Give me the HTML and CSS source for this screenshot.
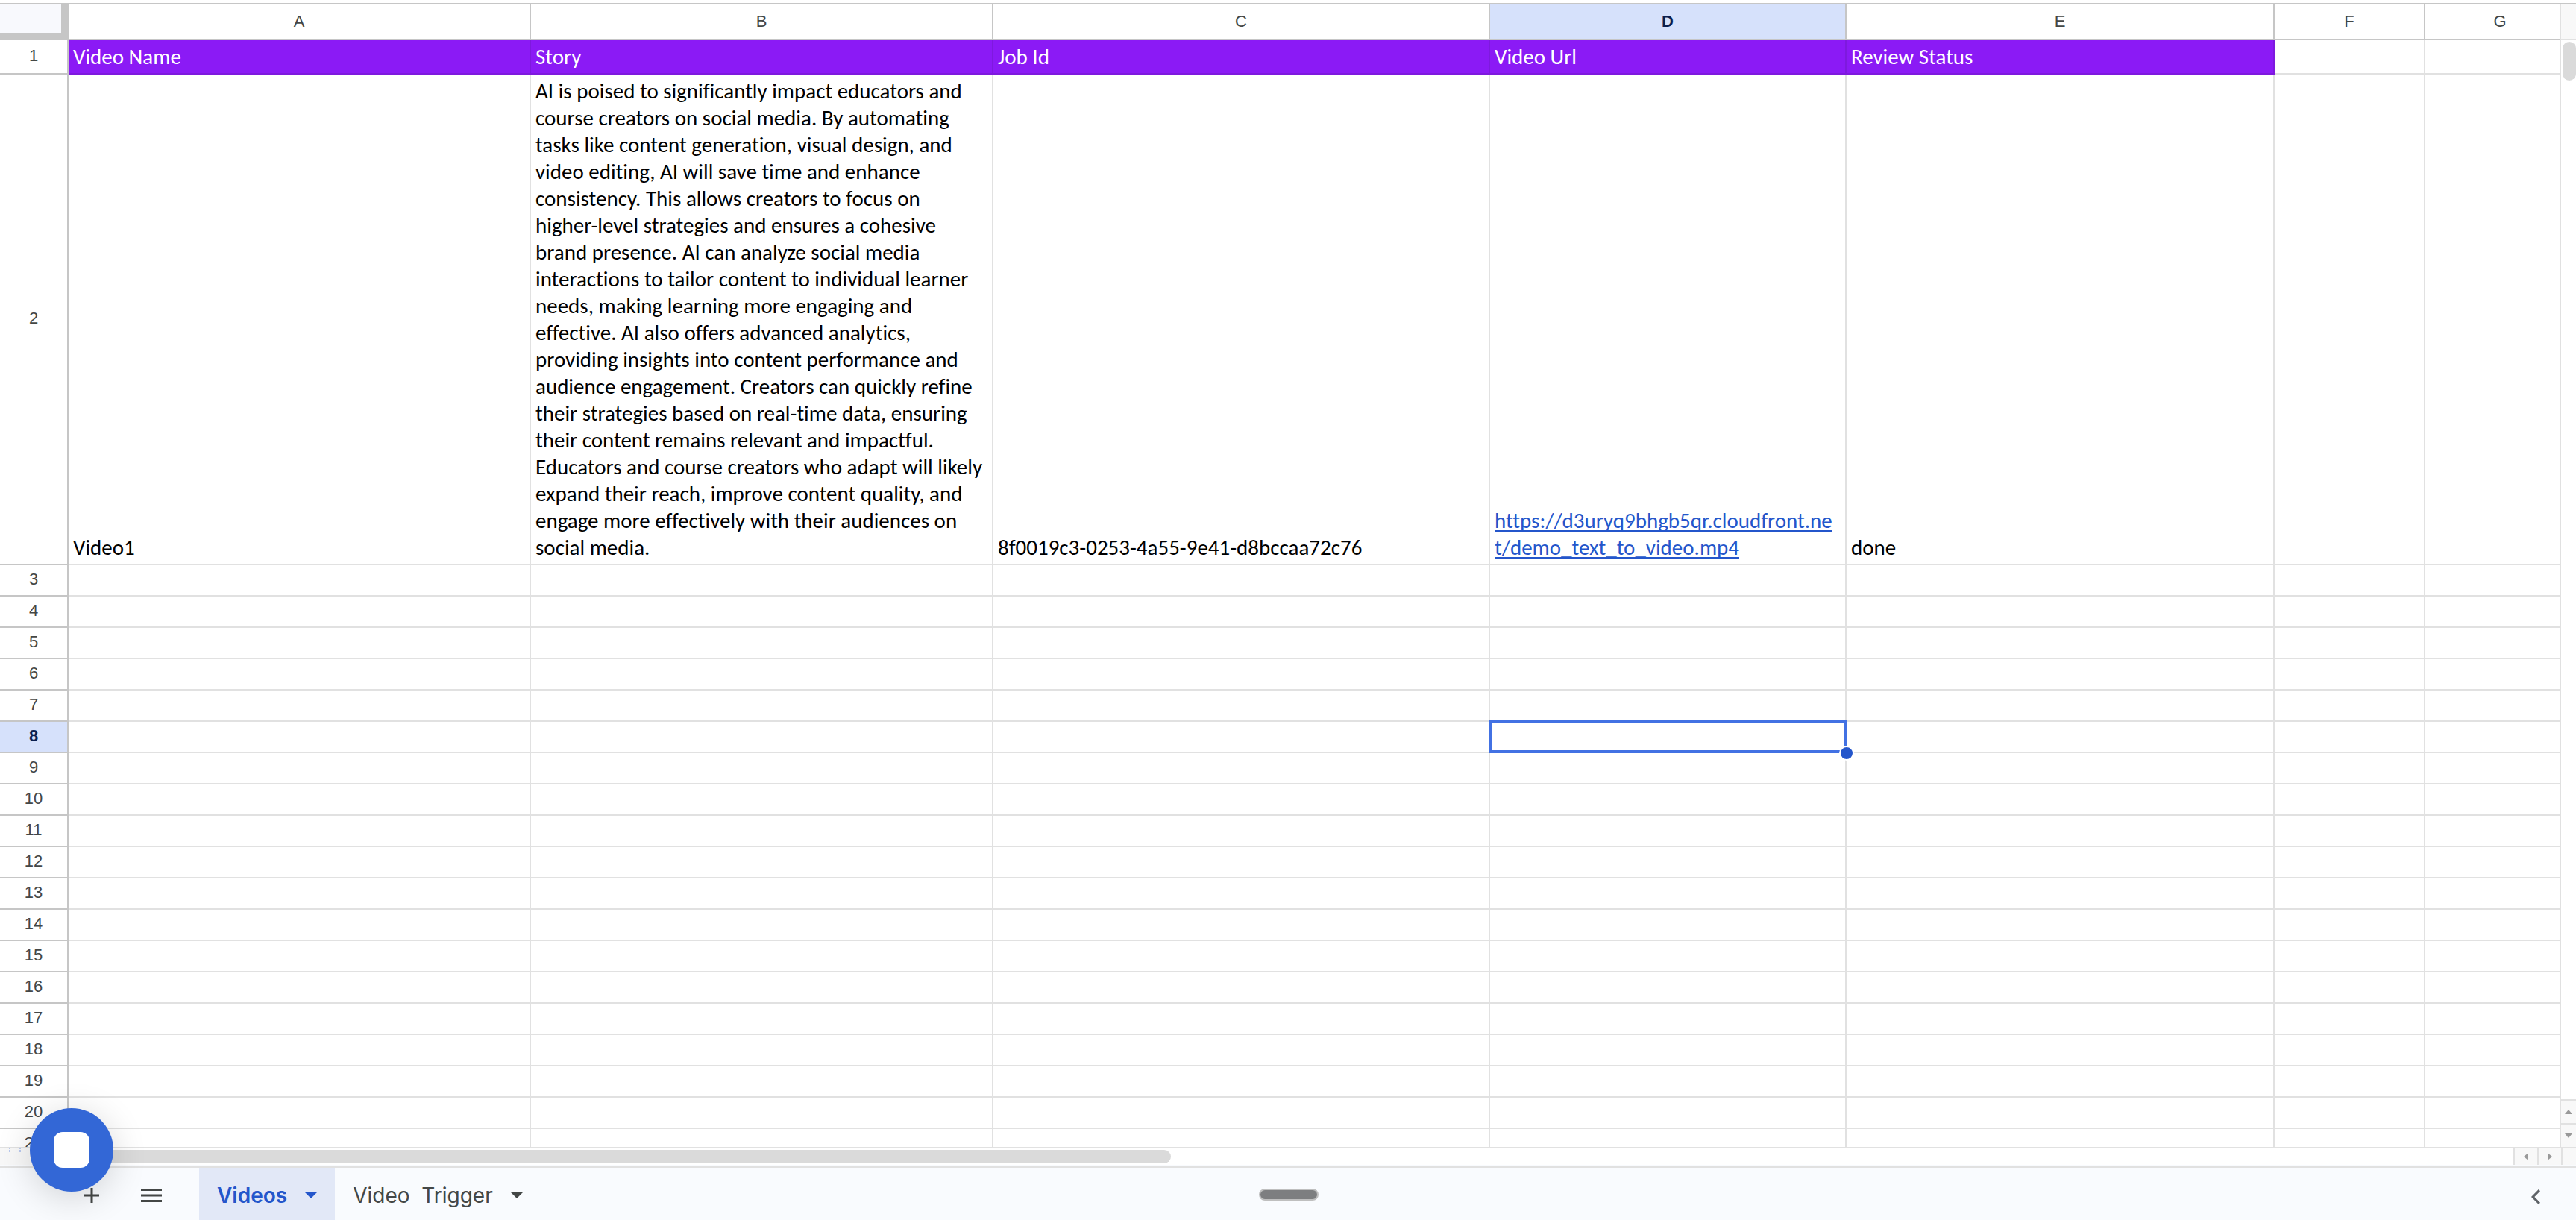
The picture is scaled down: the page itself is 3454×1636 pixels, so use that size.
FILE: index.html
```html
<!DOCTYPE html>
<html lang="en">
<head>
<meta charset="utf-8">
<title>Videos</title>
<link rel="stylesheet" href="styles.css">
</head>
<body>
<main class="sheet">
  <div class="viewport">
    <table class="grid">
      <colgroup><col class="c-num"><col class="c-name"><col class="c-story"><col class="c-job"><col class="c-url"><col class="c-status"><col class="c-blank"><col class="c-blank"></colgroup>
      <thead>
        <tr><td class="corner"></td><th scope="col">A</th><th scope="col">B</th><th scope="col">C</th><th scope="col" class="active">D</th><th scope="col">E</th><th scope="col">F</th><th scope="col">G</th></tr>
      </thead>
      <tbody>
        <tr class="titles"><th scope="row">1</th><td>Video Name</td><td>Story</td><td>Job Id</td><td>Video Url</td><td>Review Status</td><td></td><td></td></tr>
        <tr><th scope="row">2</th><td>Video1</td><td>AI is poised to significantly impact educators and course creators on social media. By automating tasks like content generation, visual design, and video editing, AI will save time and enhance consistency. This allows creators to focus on higher-level strategies and ensures a cohesive brand presence. AI can analyze social media interactions to tailor content to individual learner needs, making learning more engaging and effective. AI also offers advanced analytics, providing insights into content performance and audience engagement. Creators can quickly refine their strategies based on real-time data, ensuring their content remains relevant and impactful. Educators and course creators who adapt will likely expand their reach, improve content quality, and engage more effectively with their audiences on social media.</td><td>8f0019c3-0253-4a55-9e41-d8bccaa72c76</td><td class="url"><a href="https://d3uryq9bhgb5qr.cloudfront.net/demo_text_to_video.mp4">https://d3uryq9bhgb5qr.cloudfront.net/demo_text_to_video.mp4</a></td><td>done</td><td></td><td></td></tr>
        <tr><th scope="row">3</th><td></td><td></td><td></td><td></td><td></td><td></td><td></td></tr>
        <tr><th scope="row">4</th><td></td><td></td><td></td><td></td><td></td><td></td><td></td></tr>
        <tr><th scope="row">5</th><td></td><td></td><td></td><td></td><td></td><td></td><td></td></tr>
        <tr><th scope="row">6</th><td></td><td></td><td></td><td></td><td></td><td></td><td></td></tr>
        <tr><th scope="row">7</th><td></td><td></td><td></td><td></td><td></td><td></td><td></td></tr>
        <tr><th scope="row" class="active">8</th><td></td><td></td><td></td><td class="selected"><span class="range"></span><span class="handle"></span></td><td></td><td></td><td></td></tr>
        <tr><th scope="row">9</th><td></td><td></td><td></td><td></td><td></td><td></td><td></td></tr>
        <tr><th scope="row">10</th><td></td><td></td><td></td><td></td><td></td><td></td><td></td></tr>
        <tr><th scope="row">11</th><td></td><td></td><td></td><td></td><td></td><td></td><td></td></tr>
        <tr><th scope="row">12</th><td></td><td></td><td></td><td></td><td></td><td></td><td></td></tr>
        <tr><th scope="row">13</th><td></td><td></td><td></td><td></td><td></td><td></td><td></td></tr>
        <tr><th scope="row">14</th><td></td><td></td><td></td><td></td><td></td><td></td><td></td></tr>
        <tr><th scope="row">15</th><td></td><td></td><td></td><td></td><td></td><td></td><td></td></tr>
        <tr><th scope="row">16</th><td></td><td></td><td></td><td></td><td></td><td></td><td></td></tr>
        <tr><th scope="row">17</th><td></td><td></td><td></td><td></td><td></td><td></td><td></td></tr>
        <tr><th scope="row">18</th><td></td><td></td><td></td><td></td><td></td><td></td><td></td></tr>
        <tr><th scope="row">19</th><td></td><td></td><td></td><td></td><td></td><td></td><td></td></tr>
        <tr><th scope="row">20</th><td></td><td></td><td></td><td></td><td></td><td></td><td></td></tr>
        <tr><th scope="row">21</th><td></td><td></td><td></td><td></td><td></td><td></td><td></td></tr>
      </tbody>
    </table>
  </div>
  <div class="vscroll">
    <div class="vscroll-head"></div>
    <div class="vtrack"><div class="vthumb"></div></div>
    <button class="step-v" aria-label="Scroll up"><svg width="10" height="6" viewBox="0 0 10 6"><path d="M5 0L10 6H0z"/></svg></button>
    <button class="step-v" aria-label="Scroll down"><svg width="10" height="6" viewBox="0 0 10 6"><path d="M5 6L10 0H0z"/></svg></button>
  </div>
</main>
<div class="hscroll">
  <div class="gutter"><svg width="16" height="6" viewBox="0 0 16 6"><path d="M0 0h2v1H0zM0 2h2v1H0zM0 4h2v1H0zM14 0h2v1h-2zM14 2h2v1h-2zM14 4h2v1h-2z"/></svg></div>
  <div class="htrack"><div class="hthumb"></div></div>
  <button class="step-h" aria-label="Scroll left"><svg width="6" height="10" viewBox="0 0 6 10"><path d="M0 5L6 0V10z"/></svg></button>
  <button class="step-h" aria-label="Scroll right"><svg width="6" height="10" viewBox="0 0 6 10"><path d="M6 5L0 0V10z"/></svg></button>
  <div class="end"></div>
</div>
<footer class="tabs">
  <button class="tool add" aria-label="Add sheet"><svg width="20" height="20" viewBox="0 0 20 20"><path d="M8.5 0h3v8.5H20v3h-8.5V20h-3v-8.5H0v-3h8.5z"/></svg></button>
  <button class="tool list" aria-label="All sheets"><svg width="28" height="18" viewBox="0 0 28 18"><path d="M0 0h28v3H0zM0 7.5h28v3H0zM0 15h28v3H0z"/></svg></button>
  <button class="tab current">Videos<svg width="16" height="8" viewBox="0 0 16 8"><path d="M0 0h16L8 8z"/></svg></button>
  <button class="tab">Video&nbsp; Trigger<svg width="16" height="8" viewBox="0 0 16 8"><path d="M0 0h16L8 8z"/></svg></button>
  <button class="tool side" aria-label="Show side panel"><svg width="12" height="20" viewBox="0 0 12 20"><path d="M12 2.2L4.4 10l7.6 7.8L9.8 20 0 10 9.8 0z"/></svg></button>
</footer>
<div class="grip"></div>
<button class="fab" aria-label="Stop recording"><span></span></button>
</body>
</html>
```
FILE: styles.css
```css
* { box-sizing: border-box; }
body {
  margin: 0;
  height: 100vh;
  display: flex;
  flex-direction: column;
  overflow: hidden;
  background: #fff;
  font-family: "Liberation Sans", Arial, sans-serif;
  color: #444746;
}
button { margin: 0; padding: 0; border: 0; background: none; font: inherit; color: inherit; }
svg { display: block; fill: currentColor; }

.sheet {
  flex: 1;
  min-height: 0;
  display: flex;
  margin-top: 4px;
  border-top: 2px solid #c6c6c6;
  border-bottom: 2px solid #e1e1e1;
}
.viewport { flex: 1; min-width: 0; overflow: hidden; }

.grid { table-layout: fixed; width: 0; border-collapse: separate; border-spacing: 0; }
.c-num { width: 92px; }
.c-name, .c-story { width: 620px; }
.c-job { width: 666px; }
.c-url { width: 478px; }
.c-status { width: 574px; }
.c-blank { width: 202px; }

.grid th, .grid td { border: solid #e1e1e1; border-width: 0 2px 2px 0; }
.grid th { padding: 0 0 2px; border-color: #c6c6c6; font-size: 22px; font-weight: 400; line-height: 26px; text-align: center; vertical-align: middle; }
.grid thead th { height: 48px; padding: 0; }
.grid tbody th { height: 42px; }
.grid td {
  padding: 4px 8px 4px 6px;
  font-family: Carlito, Calibri, Lato, sans-serif;
  font-size: 29px;
  line-height: 36px;
  font-variant-ligatures: none;
  color: #000;
  vertical-align: bottom;
}
.grid td:empty { padding: 0; }
.grid .corner { background: #f8f9fd; border-color: #c6c6c6; border-width: 0 10px 10px 0; }
.grid th.active { background: #d6e1fb; color: #0b1f4f; font-weight: 700; }
.grid .titles td:not(:empty) { background: #8b1af5; border-color: #7e19de; color: #fff; }
.url { word-break: break-all; }
.url a { color: #2456cb; text-underline-offset: 3px; text-decoration-thickness: 2px; text-decoration-skip-ink: none; }

.grid .selected { position: relative; padding: 0; }
.range { position: absolute; inset: -2px; border: 4px solid #4271e3; }
.handle { position: absolute; right: -12px; bottom: -12px; width: 20px; height: 20px; border: 2px solid #fff; border-radius: 50%; background: #2456cb; z-index: 1; }

.vscroll { width: 22px; display: flex; flex-direction: column; border-left: 2px solid #e1e1e1; }
.vscroll-head { height: 48px; background: #f8f8f8; border-bottom: 2px solid #e1e1e1; }
.vtrack { flex: 1; padding: 2px 0 0 2px; }
.vthumb { height: 52px; border-radius: 9px; background: #dadada; }
.step-v { height: 32px; display: grid; place-items: center; border-top: 2px solid #e1e1e1; background: #f8f8f8; color: #999; }

.hscroll { height: 24px; display: flex; border-bottom: 2px solid #f9fbfe; }
.gutter { width: 92px; padding-left: 12px; background: #f8f8f8; color: #b9c9ef; }
.htrack { flex: 1; padding: 2px 0; }
.hthumb { width: 1478px; height: 18px; border-radius: 9px; background: #dadada; }
.step-h { width: 32px; display: grid; place-items: center; border-left: 2px solid #e1e1e1; background: #f8f8f8; color: #999; }
.end { width: 20px; border-left: 2px solid #e1e1e1; background: #f8f8f8; }

.tabs { height: 72px; display: flex; align-items: stretch; border-top: 2px solid #e1e1e1; background: #f9fbfe; }
.tool { display: grid; place-items: center; padding-top: 4px; }
.add { width: 60px; margin-left: 93px; }
.list { width: 60px; margin: 0 34px 0 20px; }
.tab { display: flex; align-items: center; gap: 24px; padding: 4px 24px 0; font-family: Inter, sans-serif; font-size: 28px; line-height: 36px; white-space: pre; }
.current { background: #e2e8f7; color: #2456cb; font-weight: 600; }
.side { width: 48px; margin-left: auto; margin-right: 30px; padding-top: 8px; color: #5f6368; }

.grip { position: fixed; left: 50%; bottom: 26px; width: 80px; height: 16px; margin-left: -39px; border: 2px solid #bfbfbf; border-radius: 8px; background: #7d7e80; }
.fab { position: fixed; left: 40px; bottom: 38px; width: 112px; height: 112px; display: grid; place-items: center; border-radius: 50%; background: #3367d6; box-shadow: 0 8px 48px rgba(0, 0, 0, .16); }
.fab span { width: 48px; height: 48px; border-radius: 12px; background: #fff; }
```
